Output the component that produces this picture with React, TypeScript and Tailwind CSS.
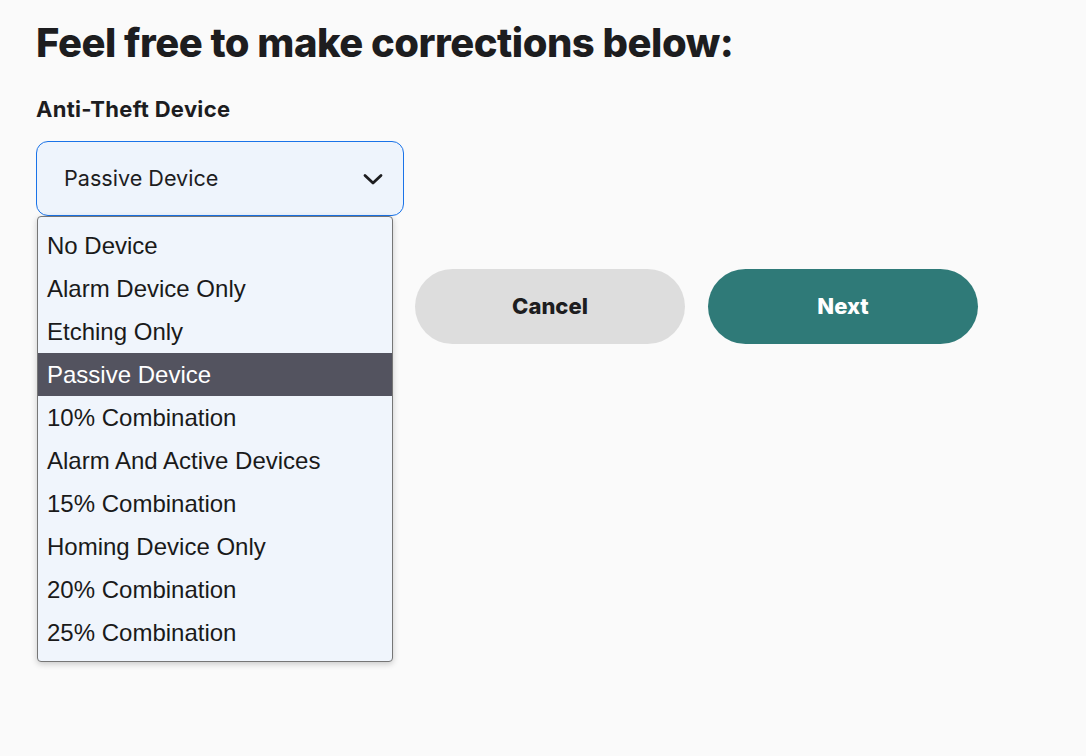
import React from "react";

const options = [
  "No Device",
  "Alarm Device Only",
  "Etching Only",
  "Passive Device",
  "10% Combination",
  "Alarm And Active Devices",
  "15% Combination",
  "Homing Device Only",
  "20% Combination",
  "25% Combination",
];

export default function App() {
  const selected = "Passive Device";
  return (
    <div className="min-h-[756px] w-full bg-[#fafafa] text-[#1d1d1f] font-['Inter',sans-serif]">
      <div className="px-[36px] pt-[19px]">
        <h1 className="text-[40px] leading-[48px] font-extrabold tracking-[-0.5px]">
          Feel free to make corrections below:
        </h1>
        <div className="mt-[29px] text-[22px] leading-[26px] font-bold tracking-[0.3px]">Anti-Theft Device</div>
        <div className="relative mt-[19px] w-[368px]">
          <div className="flex h-[75px] items-center justify-between rounded-[12px] border border-[#1a73e8] bg-[#eef4fc] pl-[27px] pr-[18px]">
            <span className="text-[21.6px]">{selected}</span>
            <svg width="24" height="24" viewBox="0 0 24 24" fill="none" stroke="#1d1d1f" strokeWidth="2.8" strokeLinecap="round" strokeLinejoin="round">
              <path d="M4 8.5l8 7.5 8-7.5" />
            </svg>
          </div>
          <ul className="absolute left-[1px] top-[75px] z-10 w-[356px] rounded-[4px] border border-[#767676] bg-[#f0f5fc] py-[7px] shadow-[0_2px_6px_rgba(0,0,0,0.2)] font-['Liberation_Sans',Arial,sans-serif] text-[24px]">
            {options.map((o) => (
              <li
                key={o}
                className={
                  o === selected
                    ? "flex h-[43px] items-center bg-[#53535f] pl-[9px] text-white"
                    : "flex h-[43px] items-center pl-[9px] text-[#1a1a1a]"
                }
              >
                {o}
              </li>
            ))}
          </ul>
        </div>
        <div className="mt-[53px] flex gap-[23px] pl-[379px]">
          <button className="h-[75px] w-[270px] rounded-full bg-[#dddddd] text-[22px] font-extrabold text-[#1d1d1f]">
            Cancel
          </button>
          <button className="h-[75px] w-[270px] rounded-full bg-[#2f7a78] text-[22px] font-extrabold text-white">
            Next
          </button>
        </div>
      </div>
    </div>
  );
}
